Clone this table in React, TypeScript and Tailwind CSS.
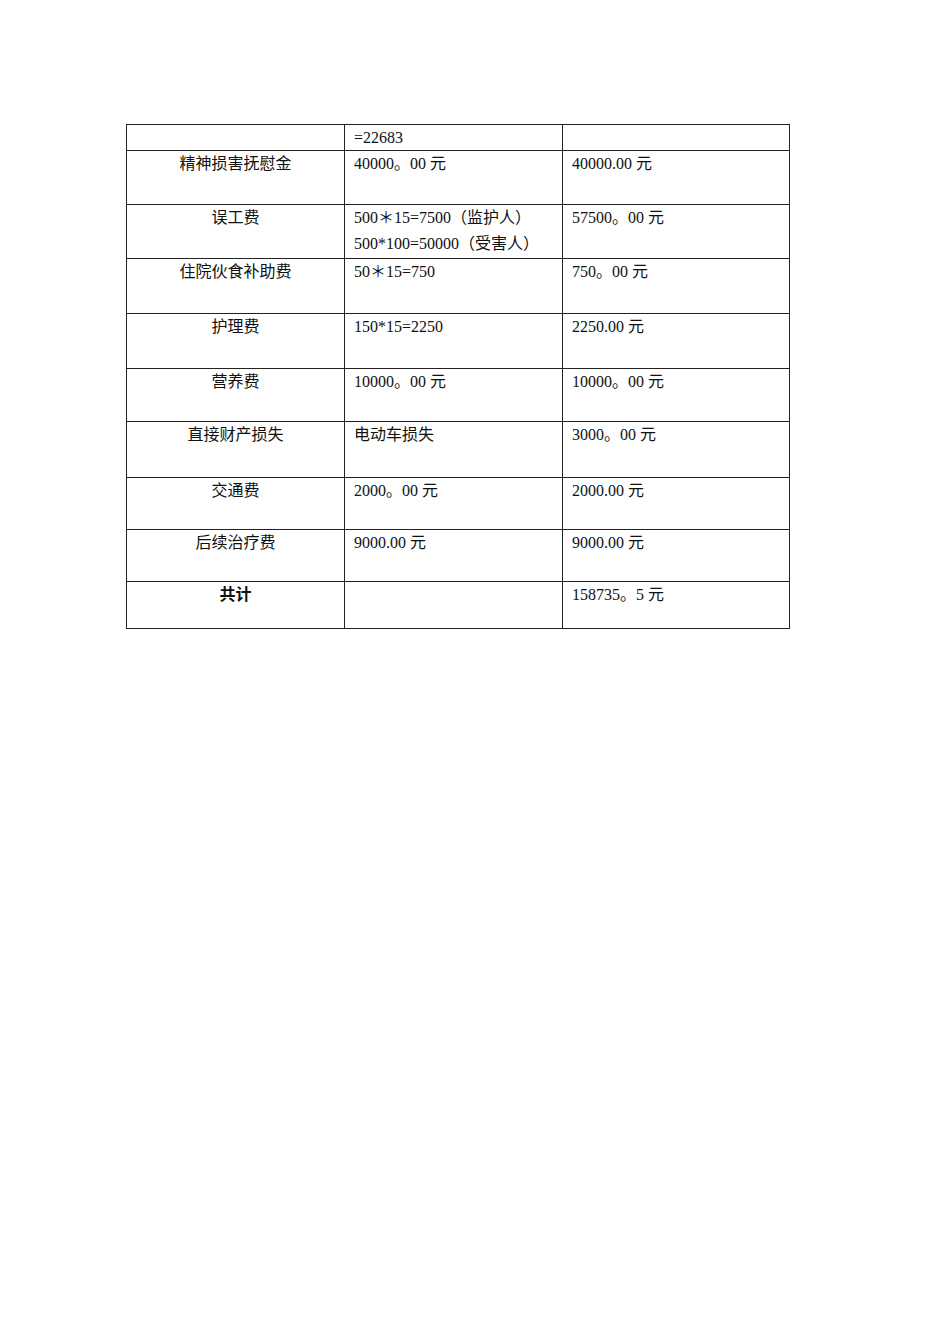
const font = { fontFamily: '"Liberation Serif", "Noto Sans CJK SC", serif' }

type Row = { name: string; calc: string[]; total: string; h: string; bold?: boolean }

const rows: Row[] = [
  { name: "", calc: ["=22683"], total: "", h: "h-[26px]" },
  { name: "精神损害抚慰金", calc: ["40000。00 元"], total: "40000.00 元", h: "h-[54px]" },
  { name: "误工费", calc: ["500＊15=7500（监护人）", "500*100=50000（受害人）"], total: "57500。00 元", h: "h-[54px]" },
  { name: "住院伙食补助费", calc: ["50＊15=750"], total: "750。00 元", h: "h-[55px]" },
  { name: "护理费", calc: ["150*15=2250"], total: "2250.00 元", h: "h-[55px]" },
  { name: "营养费", calc: ["10000。00 元"], total: "10000。00 元", h: "h-[53px]" },
  { name: "直接财产损失", calc: ["电动车损失"], total: "3000。00 元", h: "h-[56px]" },
  { name: "交通费", calc: ["2000。00 元"], total: "2000.00 元", h: "h-[52px]" },
  { name: "后续治疗费", calc: ["9000.00 元"], total: "9000.00 元", h: "h-[52px]" },
  { name: "共计", calc: [], total: "158735。5 元", h: "h-[47px]", bold: true },
]

export default function App() {
  return (
    <div className="min-h-[1344px] w-[950px] bg-white pl-[126px] pt-[124px] text-[16px] leading-[25px] text-[#111]" style={font}>
      <table className="w-[663px] table-fixed border-collapse">
        <colgroup>
          <col className="w-[218px]" />
          <col className="w-[218px]" />
          <col className="w-[227px]" />
        </colgroup>
        <tbody>
          {rows.map((r, i) => (
            <tr key={i} className={r.h}>
              <td className={`border border-[#222] px-2 pt-0 align-top text-center ${r.bold ? "font-bold" : ""}`}>{r.name}</td>
              <td className="border border-[#222] pl-[9px] pt-0 align-top">
                {r.calc.map((c, j) => (
                  <div key={j} className={j > 0 ? "mt-px" : ""}>{c}</div>
                ))}
              </td>
              <td className="border border-[#222] pl-[9px] pt-0 align-top">{r.total}</td>
            </tr>
          ))}
        </tbody>
      </table>
    </div>
  )
}
